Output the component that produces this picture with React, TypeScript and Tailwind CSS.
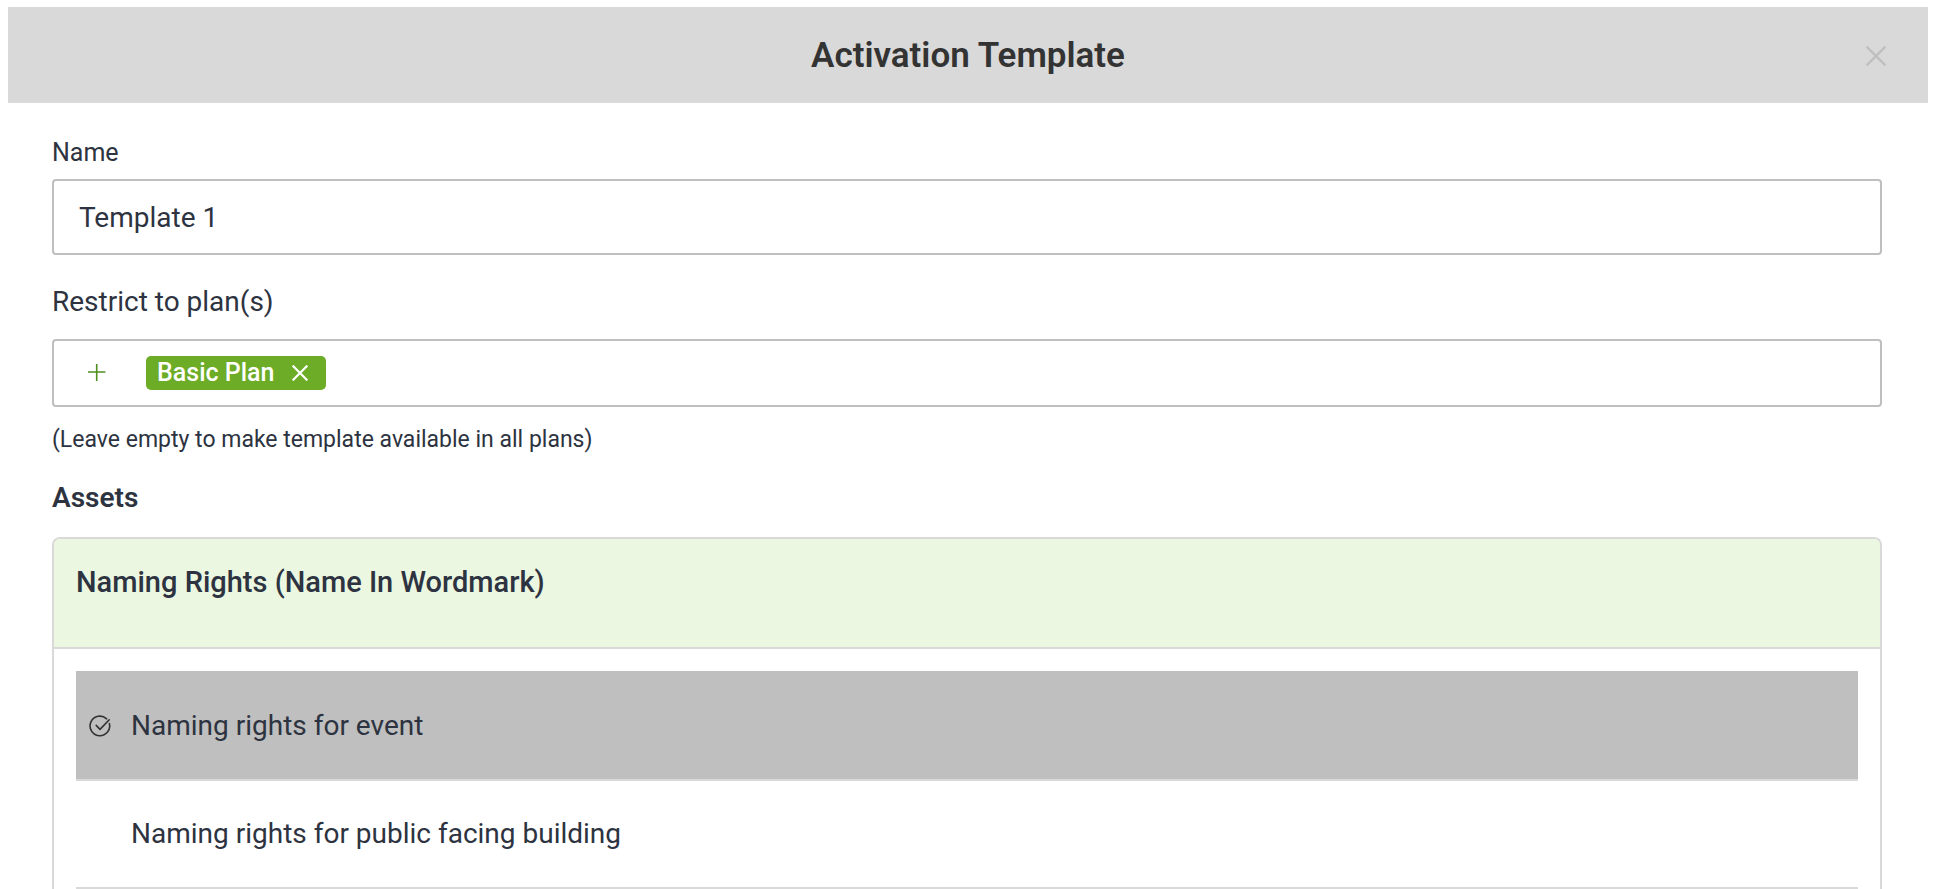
import { useState } from "react";

const assets = ["Naming rights for event", "Naming rights for public facing building"];

function CloseIcon({ className, width }: { className: string; width: number }) {
  return (
    <svg viewBox="0 0 20 20" className={className} fill="none" stroke="currentColor" strokeWidth={width} aria-hidden="true">
      <path d="M0.8 0.8 19.2 19.2M19.2 0.8 0.8 19.2" />
    </svg>
  );
}

function CheckIcon() {
  return (
    <svg
      viewBox="0 0 22 22"
      className="size-[22px]"
      fill="none"
      stroke="#333"
      strokeWidth="1.6"
      strokeLinecap="round"
      strokeLinejoin="round"
      aria-hidden="true"
    >
      <path d="M20.4 8.6A9.8 9.8 0 1 1 17.6 3.8" />
      <path d="M7.2 10.4 11 14.4 20.2 4.8" />
    </svg>
  );
}

export default function App() {
  const [name, setName] = useState("Template 1");
  const [plans, setPlans] = useState(["Basic Plan"]);
  const [selected, setSelected] = useState(0);

  return (
    <main className="h-screen overflow-hidden bg-white pt-[7px] pr-[10px] pl-2 font-['Roboto',sans-serif] text-[28px] leading-9 text-[#2d3340]">
      <header className="grid h-24 grid-cols-[1fr_auto_1fr] items-center bg-[#d9d9d9] px-[42px] pt-0.5">
        <h1 className="col-start-2 text-[35px] leading-10 font-semibold text-[#333]">Activation Template</h1>
        <button type="button" aria-label="Close" className="justify-self-end text-[#bfbfbf]">
          <CloseIcon className="size-5" width={2.4} />
        </button>
      </header>

      <form className="pt-8 pr-[46px] pl-11" onSubmit={(e) => e.preventDefault()}>
        <label htmlFor="template-name" className="block text-[25px] leading-9">
          Name
        </label>
        <input
          id="template-name"
          value={name}
          onChange={(e) => setName(e.target.value)}
          className="mt-2 block h-[76px] w-full rounded-sm border-2 border-[#bfbfbf] bg-white px-[25px] outline-none"
        />

        <div role="group" aria-labelledby="plans-label" className="mt-[29px]">
          <h2 id="plans-label">Restrict to plan(s)</h2>
          <div className="mt-[19px] flex h-[68px] items-center rounded-sm border-2 border-[#bfbfbf] pl-[34px]">
            <button type="button" aria-label="Add plan" className="mr-10 text-[#4f8f1d]">
              <svg viewBox="0 0 18 18" className="size-[18px]" stroke="currentColor" strokeWidth="1.6" aria-hidden="true">
                <path d="M0 8H17.4M8.7 0V17" />
              </svg>
            </button>
            {plans.map((plan) => (
              <span key={plan} className="flex h-[34px] items-center gap-[18px] rounded-[5px] bg-[#6cac27] pr-[18px] pl-[11px] text-[25px] leading-8 font-medium text-white">
                {plan}
                <button type="button" aria-label={`Remove ${plan}`} onClick={() => setPlans(plans.filter((p) => p !== plan))}>
                  <CloseIcon className="size-4" width={2.8} />
                </button>
              </span>
            ))}
          </div>
          <p className="mt-[15px] text-[23px] leading-9">(Leave empty to make template available in all plans)</p>
        </div>

        <h2 className="mt-[22px] font-semibold">Assets</h2>
        <section className="mt-[21px] overflow-hidden rounded-t-lg border-2 border-b-0 border-[#d9d9d9]">
          <h3 className="border-b-2 border-[#d9d9d9] bg-[#ebf7e0] px-[22px] pt-[25px] pb-[47px] text-[29px] leading-9 font-medium">
            Naming Rights (Name In Wordmark)
          </h3>
          <ul className="px-[22px] pt-[22px]">
            {assets.map((asset, i) => (
              <li key={asset} className="border-b-2 border-[#d9d9d9]">
                <button
                  type="button"
                  aria-pressed={selected === i}
                  onClick={() => setSelected(i)}
                  className={
                    selected === i
                      ? "flex w-full items-center bg-[#bfbfbf] pt-[37px] pb-[35px] pl-[13px] text-left"
                      : "flex w-full items-center bg-white py-[35px] pl-[13px] text-left"
                  }
                >
                  <span className="w-[42px]">{selected === i && <CheckIcon />}</span>
                  {asset}
                </button>
              </li>
            ))}
          </ul>
        </section>
      </form>
    </main>
  );
}
